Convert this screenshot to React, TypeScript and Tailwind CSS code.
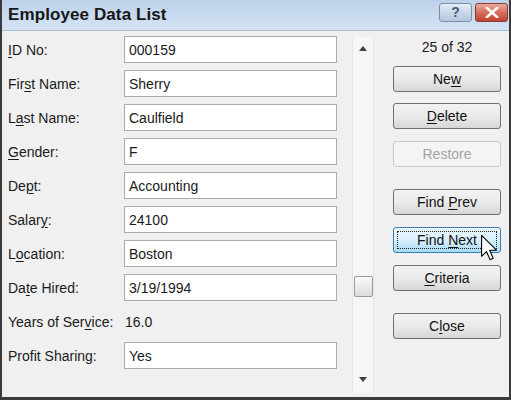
import React from "react";

const U = ({ c }: { c: string }) => <span className="underline underline-offset-2">{c}</span>;

type Row = { label: React.ReactNode; value: string; input: boolean };

const rows: Row[] = [
  { label: <><U c="I" />D No:</>, value: "000159", input: true },
  { label: <>Fir<U c="s" />t Name:</>, value: "Sherry", input: true },
  { label: <>L<U c="a" />st Name:</>, value: "Caulfield", input: true },
  { label: <><U c="G" />ender:</>, value: "F", input: true },
  { label: <>De<U c="p" />t:</>, value: "Accounting", input: true },
  { label: <>Salar<U c="y" />:</>, value: "24100", input: true },
  { label: <>L<U c="o" />cation:</>, value: "Boston", input: true },
  { label: <>Da<U c="t" />e Hired:</>, value: "3/19/1994", input: true },
  { label: <>Years of Ser<U c="v" />ice:</>, value: "16.0", input: false },
  { label: <>Profit Sharing:</>, value: "Yes", input: true },
];

function Btn({
  children,
  mt,
  disabled,
  hot,
}: {
  children: React.ReactNode;
  mt: string;
  disabled?: boolean;
  hot?: boolean;
}) {
  const base =
    "relative h-[26px] w-[108px] rounded-[3px] border flex items-center justify-center text-[14px] ";
  const cls = disabled
    ? "border-[#c9c9c9] bg-[#f4f4f4] text-[#a3a3a3]"
    : hot
    ? "border-[#3c7fb1] bg-gradient-to-b from-[#eaf6fd] via-[#d9f0fc] to-[#a7d9f5] text-[#111]"
    : "border-[#707070] bg-gradient-to-b from-[#f2f2f2] via-[#ebebeb] to-[#d6d6d6] text-[#111]";
  return (
    <div className={`${mt} ${base} ${cls}`}>
      {hot && (
        <div className="absolute inset-[3px] border border-dotted border-[#222]" />
      )}
      <span className="relative">{children}</span>
    </div>
  );
}

export default function App() {
  return (
    <div
      className="w-[511px] h-[400px] overflow-hidden bg-[#f0f0f0] border-l-2 border-r-2 border-b-[3px] border-[#3a3a3a] flex flex-col"
      style={{ fontFamily: '"Liberation Sans", Arial, sans-serif' }}
    >
      {/* title bar */}
      <div className="h-[31px] shrink-0 bg-gradient-to-b from-[#bcd1ea] to-[#d5e4f4] border-b border-[#a9bcd0] flex items-center pl-[6px] pr-[1px]">
        <div className="text-[17px] font-bold text-[#161616] tracking-[0.1px]">Employee Data List</div>
        <div className="ml-auto flex gap-[3px] items-center -mt-[6px]">
          <div className="w-[33px] h-[19px] rounded-[3px] border border-[#7d8fa8] bg-gradient-to-b from-[#e4edf7] via-[#c9d8ea] to-[#b3c7df] flex items-center justify-center text-[#4a5a70] text-[14px] font-bold leading-none">
            ?
          </div>
          <div className="w-[33px] h-[19px] rounded-[3px] border border-[#8a3b32] bg-gradient-to-b from-[#e9a99b] via-[#d5705e] to-[#c0402e] flex items-center justify-center">
            <svg width="14" height="11" viewBox="0 0 14 11">
              <path d="M2 1 L12 10 M12 1 L2 10" stroke="#fff" strokeWidth="2.6" strokeLinecap="square" />
            </svg>
          </div>
        </div>
      </div>

      {/* body */}
      <div className="flex flex-1 relative">
        {/* form */}
        <div className="flex flex-col gap-[7px] pt-[5px] pl-[6px] w-[335px]">
          {rows.map((r, i) => (
            <div key={i} className="flex items-center h-[27px] text-[14px] text-[#1a1a1a]">
              <div className="w-[116px] shrink-0 pt-[1px]">{r.label}</div>
              {r.input ? (
                <div className="w-[213px] h-[27px] bg-white border border-[#ababab] flex items-center pl-[4px] pt-[1px]">
                  {r.value}
                </div>
              ) : (
                <div className="pl-[1px] pt-[1px]">{r.value}</div>
              )}
            </div>
          ))}
        </div>

        {/* scrollbar */}
        <div className="ml-[15px] mt-[6px] mb-[4px] w-[22px] bg-[#f6f6f6] border-l border-r border-[#e6e6e6] flex flex-col items-center">
          <svg width="8" height="5" viewBox="0 0 8 5" className="mt-[9px]">
            <path d="M0 5 L4 0 L8 5 Z" fill="#404040" />
          </svg>
          <div className="mt-[225px] w-[19px] h-[21px] rounded-[2px] border border-[#9a9a9a] bg-gradient-to-b from-[#fafafa] to-[#dcdcdc]" />
          <svg width="8" height="5" viewBox="0 0 8 5" className="mt-[80px]">
            <path d="M0 0 L8 0 L4 5 Z" fill="#404040" />
          </svg>
        </div>

        {/* buttons */}
        <div className="ml-[19px] flex flex-col w-[108px]">
          <div className="mt-[6px] text-center text-[14px] text-[#1a1a1a] h-[20px] leading-[20px]">25 of 32</div>
          <Btn mt="mt-[9px]">Ne<U c="w" /></Btn>
          <Btn mt="mt-[11px]"><U c="D" />elete</Btn>
          <Btn mt="mt-[12px]" disabled>Restore</Btn>
          <Btn mt="mt-[22px]">Find <U c="P" />rev</Btn>
          <Btn mt="mt-[12px]" hot>Find <U c="N" />ext</Btn>
          <Btn mt="mt-[12px]"><U c="C" />riteria</Btn>
          <Btn mt="mt-[22px]">C<U c="l" />ose</Btn>
        </div>

        {/* cursor */}
        <svg
          className="absolute left-[478px] top-[203px]"
          width="18"
          height="27"
          viewBox="0 0 13 20"
        >
          <path
            d="M1 1 L1 16.5 L4.6 13 L7.3 19 L9.6 18 L7 12 L12 12 Z"
            fill="#fff"
            stroke="#000"
            strokeWidth="0.8"
            strokeLinejoin="round"
          />
        </svg>
      </div>
    </div>
  );
}
